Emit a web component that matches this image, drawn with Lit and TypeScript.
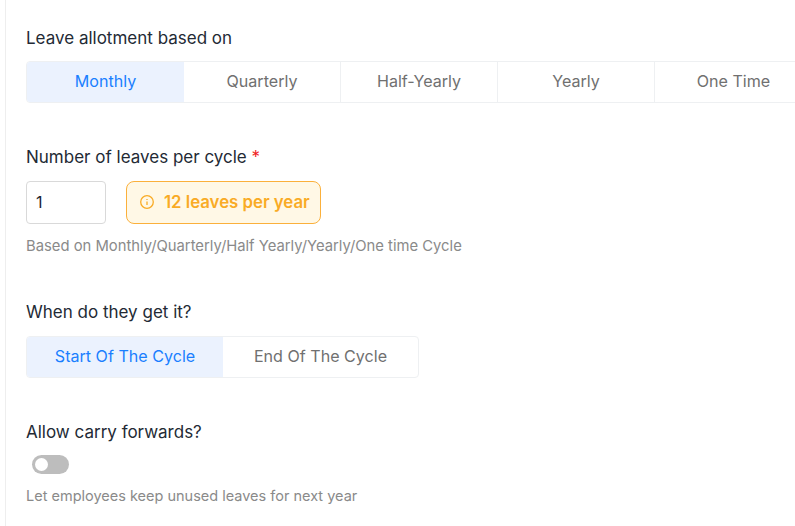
import { LitElement, html, css } from "lit";
import { customElement } from "lit/decorators.js";

@customElement("app-root")
export class AppRoot extends LitElement {
  static styles = css`
    :host { display: block; width: 795px; height: 526px; overflow: hidden; background: #fff; font-family: "Inter", "Liberation Sans", sans-serif; color: #222; box-sizing: border-box; padding-left: 5px; }
    .page { height: 526px; box-sizing: border-box; border-left: 1px solid #eee; padding: 28px 0 0 20px; display: flex; flex-direction: column; }
    .label { font-size: 17px; line-height: 20px; color: #232a35; }
    .req { color: #f01e1e; }
    .seg { display: flex; margin-top: 13px; border: 1px solid #eef0f2; border-radius: 4px; width: max-content; height: 42px; box-sizing: border-box; overflow: hidden; }
    .seg div { display: flex; align-items: center; justify-content: center; font-size: 16.1px; color: #707070; border-right: 1px solid #eef0f2; box-sizing: border-box; padding-bottom: 3px; }
    .seg div:last-child { border-right: none; }
    .seg .on { background: #ebf2fe; color: #1a7fff; border-right: none; }
    .a div { width: 157px; }
    .b { margin-top: 14px; }
    .b div { width: 196px; }
    .b div:last-child { width: 195px; }
    .row { display: flex; gap: 20px; margin-top: 14px; }
    .input { width: 80px; height: 43px; border: 1px solid #d9d9d9; border-radius: 4px; box-sizing: border-box; padding: 0 0 1px 9px; display: flex; align-items: center; font-size: 16px; color: #1c2430; }
    .pill { display: flex; align-items: center; gap: 9px; height: 43px; box-sizing: border-box; padding: 0 10px 1px 12px; border: 1px solid #fbb03b; background: #fff8e6; border-radius: 8px; color: #f9ab25; font-weight: 600; font-size: 16.8px; }
    .hint { font-size: 14.8px; line-height: 18px; color: #8a8a8a; margin-top: 13px; }
    .hint.short { font-size: 14.5px; }
    .when { margin-top: 47px; }
    .gap { margin-top: 44px; }
    .sw { width: 37px; height: 19px; border-radius: 10px; background: #bdbdbd; margin: 13px 0 0 6px; display: flex; align-items: center; padding-left: 3px; box-sizing: border-box; }
    .sw i { width: 13px; height: 13px; border-radius: 50%; background: #fff; display: block; }
  `;
  render() {
    return html`<div class="page">
      <div class="label">Leave allotment based on</div>
      <div class="seg a"><div class="on">Monthly</div><div>Quarterly</div><div>Half-Yearly</div><div>Yearly</div><div>One Time</div></div>
      <div class="label gap">Number of leaves per cycle <span class="req">*</span></div>
      <div class="row"><div class="input">1</div><div class="pill"><svg width="16" height="16" viewBox="0 0 16 16" fill="none" stroke="#f9ab25" stroke-width="1.3"><circle cx="8" cy="8" r="6.3"/><path d="M8 7.5v3.5M8 5v1"/></svg>12 leaves per year</div></div>
      <div class="hint">Based on Monthly/Quarterly/Half Yearly/Yearly/One time Cycle</div>
      <div class="label when">When do they get it?</div>
      <div class="seg b"><div class="on">Start Of The Cycle</div><div>End Of The Cycle</div></div>
      <div class="label gap">Allow carry forwards?</div>
      <div class="sw"><i></i></div>
      <div class="hint short">Let employees keep unused leaves for next year</div>
    </div>`;
  }
}
